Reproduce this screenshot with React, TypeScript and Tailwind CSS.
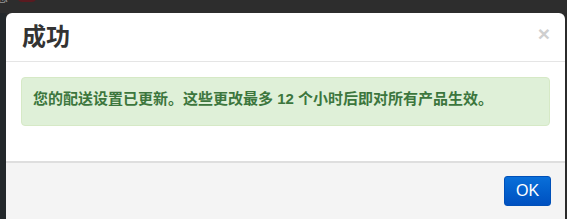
import React from "react";

export default function App() {
  return (
    <div
      className="flex h-[219px] w-[567px] flex-col overflow-hidden bg-[#2b2b2b]"
      style={{ fontFamily: '"Liberation Sans", "Noto Sans CJK SC", sans-serif' }}
    >
      <div className="flex h-[13px] shrink-0 items-end gap-[10px] overflow-hidden bg-[#2d2d2d] pb-[9px]">
        <span className="ml-[-4px] text-[12px] leading-[12px] text-[#9a9a9a]">息</span>
        <span className="mb-[2px] h-[9px] w-[18px] rounded-[4px] bg-[#5a1a20]" />
      </div>
      <div className="flex flex-1">
        <div className="w-[6px] shrink-0 bg-[#23282b]" />
        <div className="w-[559px] shrink-0 rounded-t-[6px] bg-white">
          <div className="flex items-start justify-between border-b border-[#e5e5e5] pl-4 pr-[15px] pt-[11px] pb-[11px]">
            <h3 className="text-[24px] font-bold leading-[26px] text-[#333]">成功</h3>
            <span className="mt-[-1px] text-[21px] font-bold leading-none text-[#cfcfcf]">×</span>
          </div>
          <div className="px-[15px] pt-[15px] pb-[35px]">
            <div className="rounded-[4px] border border-[#d6e9c6] bg-[#dff0d8] px-[11px] pt-[11px] pb-[17px] text-[15px] font-bold leading-[19px] text-[#3c763d]">
              您的配送设置已更新。这些更改最多 12 个小时后即对所有产品生效。
            </div>
          </div>
          <div className="flex h-[80px] justify-end border-t-2 border-[#dedede] bg-[#f4f4f4] px-[14px] pt-[13px]">
            <button className="h-[30px] w-[47px] rounded-[3px] border border-[#0050b8] bg-gradient-to-b from-[#0a6fd9] to-[#0050c0] text-[16px] text-white">
              OK
            </button>
          </div>
        </div>
      </div>
    </div>
  );
}
